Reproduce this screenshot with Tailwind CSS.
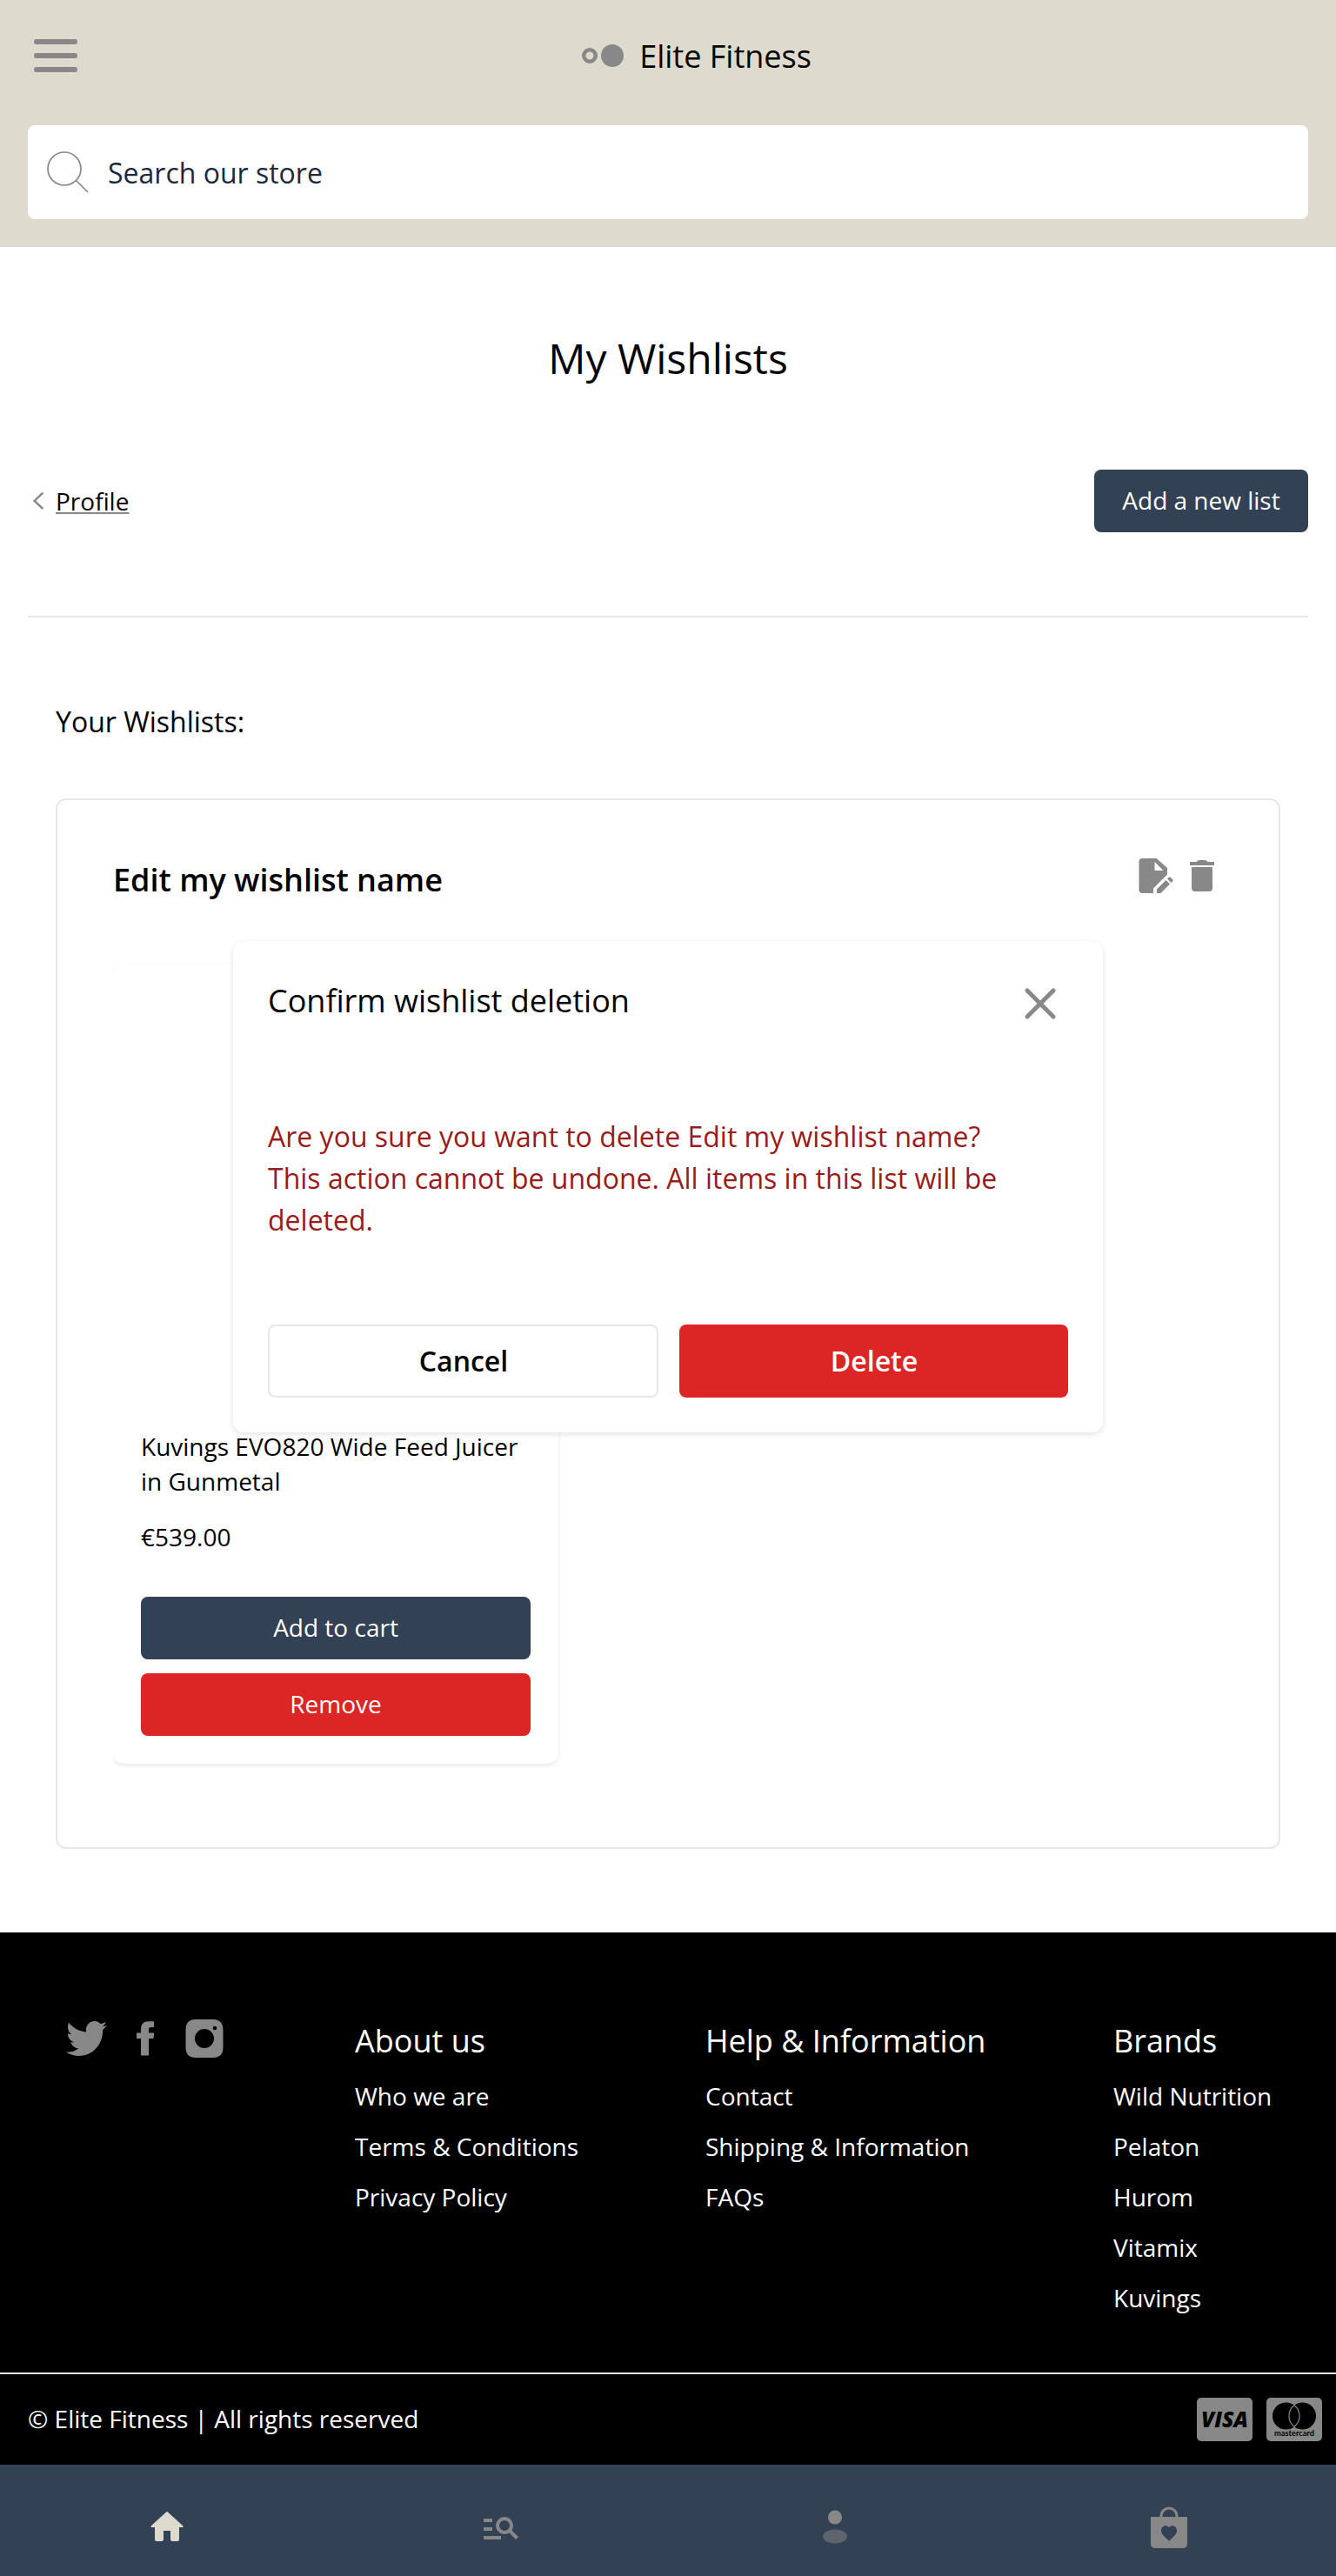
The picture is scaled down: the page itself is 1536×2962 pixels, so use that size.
<!DOCTYPE html>
<html lang="en">
<head>
<meta charset="utf-8">
<title>My Wishlists | Elite Fitness</title>
<script src="https://cdn.jsdelivr.net/npm/@tailwindcss/browser@4"></script>
</head>
<body class="w-full bg-white font-['Open_Sans',sans-serif] text-[28px] leading-10 text-black">

<header class="flex h-[284px] flex-col gap-12 bg-[#dedacd] p-8">
  <div class="flex h-16 items-center">
    <button class="h-16 w-16" aria-label="Menu">
      <svg width="64" height="64" viewBox="0 0 64 64" fill="#888"><rect x="7" y="13" width="50" height="6" rx="3"/><rect x="7" y="29" width="50" height="6" rx="3"/><rect x="7" y="45" width="50" height="6" rx="3"/></svg>
    </button>
    <a class="flex flex-1 items-center justify-center gap-[18px] pl-0.5">
      <svg width="48" height="26" viewBox="0 0 48 26"><circle cx="9" cy="13" r="6.75" fill="none" stroke="#888" stroke-width="4.5"/><circle cx="35" cy="13" r="13" fill="#888"/></svg>
      <span class="pt-0.5 text-4xl">Elite Fitness</span>
    </a>
  </div>
  <div class="flex h-[108px] items-center gap-5 rounded-lg bg-white pl-5 text-[32px] text-slate-800">
    <svg width="52" height="52" viewBox="0 0 52 52" fill="none" stroke="#888" stroke-width="1.7"><circle cx="22" cy="22" r="19"/><path d="M35.5 35.5 49 49"/></svg>
    <span class="pt-px">Search our store</span>
  </div>
</header>

<main class="relative flex flex-col px-8 pt-24 pb-24">
  <h1 class="text-center text-5xl leading-16">My Wishlists</h1>

  <div class="mt-24 flex items-center justify-between">
    <a class="flex items-center">
      <svg width="32" height="32" viewBox="0 0 32 32" fill="none" stroke="#888" stroke-width="2.4"><path d="M17.3 6.7 7.6 16l9.7 9"/></svg>
      <span class="underline decoration-[#888] decoration-2 underline-offset-2">Profile</span>
    </a>
    <button class="h-[72px] w-[246px] rounded-lg bg-[#334155] pb-0.5 text-white">Add a new list</button>
  </div>

  <hr class="mt-24 border-t-2 border-[#e5e7eb]">

  <section class="mt-24 px-8">
    <h2 class="text-[32px] leading-12">Your Wishlists:</h2>
    <div class="mt-16 h-[1208px] rounded-xl border-2 border-[#e5e7eb] p-16">
      <div class="flex items-start justify-between">
        <h3 class="text-4xl leading-14 font-semibold">Edit my wishlist name</h3>
        <div class="-mr-2 flex">
          <svg width="48" height="48" viewBox="0 0 48 48" fill="#888"><path fill-rule="evenodd" d="M7.500 3H23.500L36 14V21.500L20 37.500V43H7.500Q3.500 43 3.500 39V7Q3.500 3 7.500 3ZM21.500 7V17H31.500Z"/><path d="M24 43V38.500L34.500 28L39 32.500L28.500 43ZM36 26.500 37.500 25Q39 24 40 25L42 27Q43 28 42 29.500L40.500 31Z"/></svg>
          <svg class="ml-3" width="48" height="48" viewBox="0 0 48 48" fill="#888"><path d="M2 7H9.500Q11 5 13 5H19Q21 5 22.500 7H30V11H2ZM4 13H28V37Q28 41 24 41H8Q4 41 4 37Z"/></svg>
        </div>
      </div>

      <div class="mt-[68px] overflow-x-clip">
        <article class="flex h-[920px] w-[512px] flex-col justify-end rounded-xl px-8 pb-8 shadow-[0_2px_4px_rgba(0,0,0,0.1)]">
          <p>Kuvings EVO820 Wide Feed Juicer in Gunmetal</p>
          <p class="mt-6">€539.00</p>
          <button class="mt-[49px] h-[72px] rounded-lg bg-[#334155] pb-0.5 text-white">Add to cart</button>
          <button class="mt-4 h-[72px] rounded-lg bg-[#dc2626] pb-0.5 text-white">Remove</button>
        </article>
      </div>
    </div>
  </section>

  <div role="dialog" class="absolute top-[798px] left-[268px] flex h-[565px] w-[1000px] flex-col rounded-xl bg-white px-10 shadow-[0_2px_6px_rgba(0,0,0,0.12)]">
    <div class="flex items-start justify-between pt-10">
      <h3 class="text-4xl leading-[58px]">Confirm wishlist deletion</h3>
      <svg class="mt-2" width="64" height="48" viewBox="0 0 64 48" fill="none" stroke="#888" stroke-width="5" stroke-linecap="round"><path d="M17 9 47 39M47 9 17 39"/></svg>
    </div>
    <p class="mt-[103px] text-[32px] leading-12 text-[#991b1b]">Are you sure you want to delete Edit my wishlist name?<br>This action cannot be undone. All items in this list will be deleted.</p>
    <div class="mt-24 grid grid-cols-[449px_447px] gap-6 text-[32px] font-semibold">
      <button class="h-[84px] rounded-lg border-2 border-[#e5e7eb] pl-px">Cancel</button>
      <button class="h-[84px] rounded-lg bg-[#dc2626] pl-px text-white">Delete</button>
    </div>
  </div>
</main>

<footer class="bg-black text-white">
  <div class="grid h-[506px] grid-cols-[344px_403px_469px_auto] pt-24 pl-16">
    <div class="flex items-start">
      <svg class="mt-1.5 ml-3" width="47" height="40" viewBox="0 48 512 416" preserveAspectRatio="none" fill="#888"><path d="M459.370 151.716c.325 4.548.325 9.097.325 13.645 0 138.720-105.583 298.558-298.558 298.558-59.452 0-114.680-17.219-161.137-47.106 8.447.974 16.568 1.299 25.340 1.299 49.055 0 94.213-16.568 130.274-44.832-46.132-.975-84.792-31.188-98.112-72.772 6.498.974 12.995 1.624 19.818 1.624 9.421 0 18.843-1.300 27.614-3.573-48.081-9.747-84.143-51.980-84.143-102.985v-1.299c13.969 7.797 30.214 12.670 47.431 13.319-28.264-18.843-46.781-51.005-46.781-87.391 0-19.492 5.197-37.360 14.294-52.954 51.655 63.675 129.300 105.258 216.365 109.807-1.624-7.797-2.599-15.918-2.599-24.040 0-57.828 46.782-104.934 104.934-104.934 30.213 0 57.502 12.670 76.670 33.137 23.715-4.548 46.456-13.320 66.599-25.340-7.798 24.366-24.366 44.833-46.132 57.827 21.117-2.273 41.584-8.122 60.426-16.243-14.292 20.791-32.161 39.308-52.628 54.253z"/></svg>
      <svg class="mt-1 ml-8" width="24" height="44" viewBox="0 0 24 44" fill="#888"><path d="M7 41.500V22H2V15.500H7V11.500C7 5.500 10 2.200 15.500 2.200H22V9H18.500C16.500 9 16 10 16 11.500V15.500H22.200L21.500 22H16V41.500Z"/></svg>
      <svg class="mt-1 ml-[34px]" width="44" height="44" viewBox="0 0 44 44" fill="#888"><path fill-rule="evenodd" d="M12 0H32Q43.500 0 43.500 12V32Q43.500 44 32 44H12Q.500 44 .500 32V12Q.500 0 12 0ZM22 11A11 11 0 1 0 22 33A11 11 0 1 0 22 11ZM34 7.700A2.300 2.300 0 1 0 34 12.300A2.300 2.300 0 1 0 34 7.700Z"/></svg>
    </div>
    <div class="flex flex-col">
      <h4 class="text-4xl leading-[58px]">About us</h4>
      <ul class="mt-3.5 flex flex-col gap-[18px]"><li>Who we are</li><li>Terms &amp; Conditions</li><li>Privacy Policy</li></ul>
    </div>
    <div class="flex flex-col">
      <h4 class="text-4xl leading-[58px]">Help &amp; Information</h4>
      <ul class="mt-3.5 flex flex-col gap-[18px]"><li>Contact</li><li>Shipping &amp; Information</li><li>FAQs</li></ul>
    </div>
    <div class="flex flex-col">
      <h4 class="text-4xl leading-[58px]">Brands</h4>
      <ul class="mt-3.5 flex flex-col gap-[18px]"><li>Wild Nutrition</li><li>Pelaton</li><li>Hurom</li><li>Vitamix</li><li>Kuvings</li></ul>
    </div>
  </div>
  <div class="flex h-[106px] items-center border-t-2 border-slate-200 pr-4 pl-8">
    <span class="flex-1 pb-0.5">© Elite Fitness | All rights reserved</span>
    <svg width="64" height="50" viewBox="0 0 64 50"><rect width="64" height="50" rx="5" fill="#888"/><text x="5" y="33.500" font-family="Open Sans" font-weight="800" font-style="italic" font-size="24.500" textLength="54" lengthAdjust="spacingAndGlyphs" fill="#000">VISA</text></svg>
    <svg class="ml-4" width="64" height="50" viewBox="0 0 64 50"><rect width="64" height="50" rx="5" fill="#888"/><circle cx="22.500" cy="21" r="15.500"/><circle cx="41.500" cy="21" r="15.500"/><path d="M32 8.700A15.500 15.500 0 0 1 32 33.300A15.500 15.500 0 0 1 32 8.700Z" fill="none" stroke="#888" stroke-width="1.200"/><text x="9" y="44.300" font-family="Lato" font-weight="700" font-size="9" textLength="46" lengthAdjust="spacingAndGlyphs" fill="#000">mastercard</text></svg>
  </div>
</footer>

<nav class="grid h-32 grid-cols-4 items-center justify-items-center bg-[#334155] pt-4">
  <svg width="48" height="48" viewBox="0 0 48 48" fill="#dedacd"><path d="M24 6Q25 6 26 7.500L42.500 22.500V24H38V38Q38 40 36 40H30Q28 40 28 38V28H20V38Q20 40 18 40H12Q10 40 10 38V24H5.500V22.500L22 7.500Q23 6 24 6Z"/></svg>
  <svg width="48" height="48" viewBox="0 0 48 48" fill="#888"><path d="M4 14H14V18H4ZM4 24H14V28H4ZM4 34H24V38H4Z"/><g fill="none" stroke="#888" stroke-width="4"><circle cx="28" cy="22" r="8"/><path d="M33.500 27.500 42.500 36.500"/></g></svg>
  <svg width="48" height="48" viewBox="0 0 48 48" fill="#888"><circle cx="24" cy="12.500" r="8"/><ellipse cx="24" cy="34.500" rx="14" ry="8" opacity=".5"/></svg>
  <svg width="48" height="48" viewBox="0 0 48 48" fill="#888"><path d="M15 14V11A9 9 0 0 1 33 11V14" fill="none" stroke="#888" stroke-width="3"/><path fill-rule="evenodd" d="M3 12H45V43Q45 48 40 48H8Q3 48 3 43ZM24 24C21 20.500 15 22 15 28C15 32 19 35 24 39.500C29 35 33 32 33 28C33 22 27 20.500 24 24Z"/></svg>
</nav>
</body>
</html>
